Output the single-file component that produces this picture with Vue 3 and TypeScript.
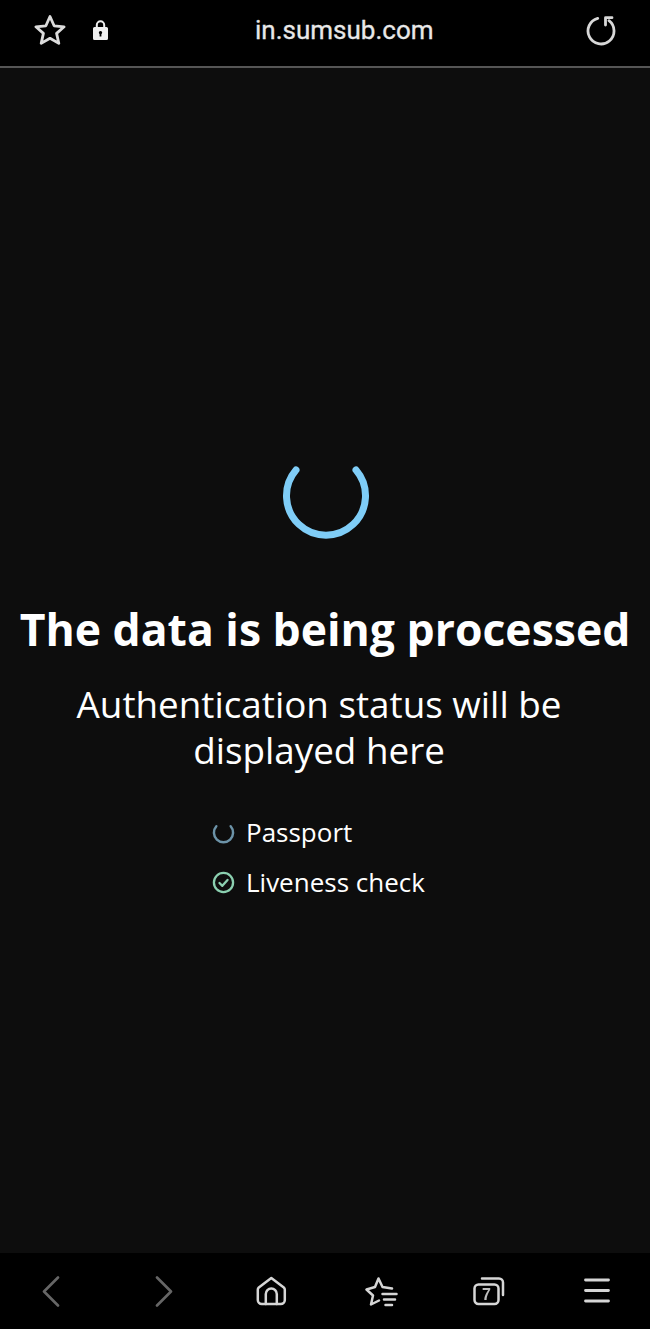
<script setup lang="ts">
const steps = [
  { label: 'Passport', done: false },
  { label: 'Liveness check', done: true },
];
</script>

<template>
  <div class="screen">
    <header class="topbar">
      <svg class="star-icon" viewBox="0 0 32 32" fill="none" stroke="#dcdcdc" stroke-width="2.800" stroke-linejoin="round">
        <path d="M16 2.500l4.100 9.300 10 1-7.500 6.600 2.200 10L16 24.300 7.200 29.400l2.200-10L1.900 12.800l10-1z" />
      </svg>
      <svg class="lock-icon" viewBox="0 0 15 20">
        <path d="M3.800 8V5a3.700 3.700 0 0 1 7.400 0V8" fill="none" stroke="#f0f0f0" stroke-width="2" />
        <path fill-rule="evenodd" d="M1.500 7h12a1.500 1.500 0 0 1 1.500 1.500v10a1.500 1.500 0 0 1-1.500 1.500h-12A1.500 1.500 0 0 1 0 18.500v-10A1.500 1.500 0 0 1 1.500 7zM7.500 11a1.700 1.700 0 0 0-.9 3.100V16.500h1.800v-2.400A1.700 1.700 0 0 0 7.500 11z" fill="#f0f0f0" />
      </svg>
      <span class="url">in.sumsub.com</span>
      <svg class="reload-icon" viewBox="0 -1 32 32" fill="none" stroke="#d8d8d8" stroke-width="2.800" stroke-linecap="round" stroke-linejoin="round">
        <path d="M12.700 3.400A13 13 0 1 0 24 5.700" />
        <path d="M27 2.700H20.500V10" />
      </svg>
    </header>

    <main class="content">
      <svg class="spinner" viewBox="-1 0 92 92" fill="none">
        <path d="M16 21A39.500 39.500 0 1 0 76 21" stroke="#7fcdf7" stroke-width="7" stroke-linecap="round" />
      </svg>
      <h1 class="title">The data is being processed</h1>
      <p class="subtitle">Authentication status will be displayed here</p>
      <ul class="steps">
        <li v-for="step in steps" :key="step.label" class="step">
          <svg v-if="step.done" class="step-icon" viewBox="0 0 24 24" fill="none" stroke="#8bd0b0" stroke-linecap="round" stroke-linejoin="round">
            <circle cx="12" cy="12" r="10" stroke-width="2.400" />
            <path d="M7.800 12.500l3 3 5.400-6.200" stroke-width="2.400" />
          </svg>
          <svg v-else class="step-icon" viewBox="0 0 24 24" fill="none" stroke="#6c93a8" stroke-linecap="round">
            <path d="M4.500 5.500A10 10 0 1 0 19.500 5.500" stroke-width="2.600" />
          </svg>
          <span>{{ step.label }}</span>
        </li>
      </ul>
    </main>

    <footer class="toolbar">
      <svg class="nav-icon" viewBox="0 0 32 32" fill="none" stroke="#666" stroke-width="2.600" stroke-linecap="round" stroke-linejoin="round">
        <path d="M23 2.500L9 16.500l14 14" />
      </svg>
      <svg class="nav-icon" viewBox="-4 0 32 32" fill="none" stroke="#666" stroke-width="2.600" stroke-linecap="round" stroke-linejoin="round">
        <path d="M9 2.500l14 14-14 14" />
      </svg>
      <svg class="nav-icon" viewBox="-2.300 0 32 32" fill="none" stroke="#d6d6d6" stroke-width="2.500" stroke-linecap="round" stroke-linejoin="round">
        <path d="M16 3L3.500 12.500a3 3 0 0 0-1 2.300V25a4 4 0 0 0 4 4h19a4 4 0 0 0 4-4V14.800a3 3 0 0 0-1-2.300z" />
        <path d="M10.500 29V19a5.500 5.500 0 0 1 11 0v10" />
      </svg>
      <svg class="nav-icon" viewBox="-2 0 32 32" fill="none" stroke="#d6d6d6" stroke-width="2.500" stroke-linecap="round" stroke-linejoin="round">
        <path d="M14 25.500L6 29.500l2-9-6.500-6L10 12l3.500-8.500 4 8.500 9.500 1.500" />
        <path d="M17.500 19H31.500M19 24.500H30M20.500 30H27" />
      </svg>
      <svg class="nav-icon" viewBox="-1 0 32 32" fill="none" stroke="#d6d6d6" stroke-width="2.500" stroke-linecap="round" stroke-linejoin="round">
        <rect x="1.500" y="9.500" width="24" height="19.500" rx="4" />
        <path d="M9 3.500H26a4 4 0 0 1 4 4V20" />
        <text class="tab-count" x="13.500" y="24.500" text-anchor="middle">7</text>
      </svg>
      <svg class="nav-icon" viewBox="0 0 32 32" fill="none" stroke="#d6d6d6" stroke-width="2.800" stroke-linecap="round">
        <path d="M4.500 5h23M4.500 15.500h23M4.500 26h23" />
      </svg>
    </footer>
  </div>
</template>

<style scoped>
.screen {
  width: 650px;
  height: 1329px;
  display: flex;
  flex-direction: column;
  background: #0d0d0d;
  color: #fff;
  font-family: "Open Sans", "Noto Sans", sans-serif;
}

.topbar {
  height: 68px;
  flex: none;
  display: flex;
  align-items: center;
  padding: 0 33px 6px 34px;
  background: #000;
  border-bottom: 2px solid #555;
  box-sizing: border-box;
}

.star-icon {
  width: 32px;
  height: 32px;
  filter: blur(0.4px);
}

.lock-icon {
  width: 15px;
  height: 20px;
  margin-left: 27px;
  filter: blur(0.4px);
}

.url {
  margin-left: 147px;
  flex: 1;
  font-family: Roboto, "Liberation Sans", sans-serif;
  font-size: 26px;
  color: #e8e8e8;
  -webkit-text-stroke: 0.3px #e8e8e8;
}

.reload-icon {
  width: 32px;
  height: 32px;
  filter: blur(0.4px);
}

.content {
  flex: 1;
  display: flex;
  flex-direction: column;
  align-items: center;
  padding-top: 381px;
}

.spinner {
  width: 92px;
  height: 92px;
}

.title {
  margin: 58px 0 0;
  font-size: 44.500px;
  line-height: 60px;
  font-weight: 700;
  white-space: nowrap;
}

.subtitle {
  width: 540px;
  margin: 22px 0 0;
  padding-right: 12px;
  font-size: 36.800px;
  line-height: 46px;
  text-align: center;
}

.steps {
  align-self: flex-start;
  margin: 41px 0 0 212px;
  padding: 0;
  list-style: none;
  display: flex;
  flex-direction: column;
  gap: 14px;
}

.step {
  display: flex;
  align-items: center;
  gap: 11px;
  font-size: 26px;
  line-height: 36px;
}

.step-icon {
  width: 23px;
  height: 23px;
}

.toolbar {
  height: 76px;
  flex: none;
  display: flex;
  align-items: center;
  justify-content: space-between;
  padding: 0 37px 0 35px;
  background: #000;
}

.nav-icon {
  width: 32px;
  height: 32px;
  overflow: visible;
  filter: blur(0.4px);
}

.tab-count {
  fill: #bdbdbd;
  stroke: none;
  font-family: "Liberation Sans", sans-serif;
  font-size: 16px;
  font-weight: 700;
}
</style>

<style>
html,
body {
  background: #0d0d0d;
}
</style>
